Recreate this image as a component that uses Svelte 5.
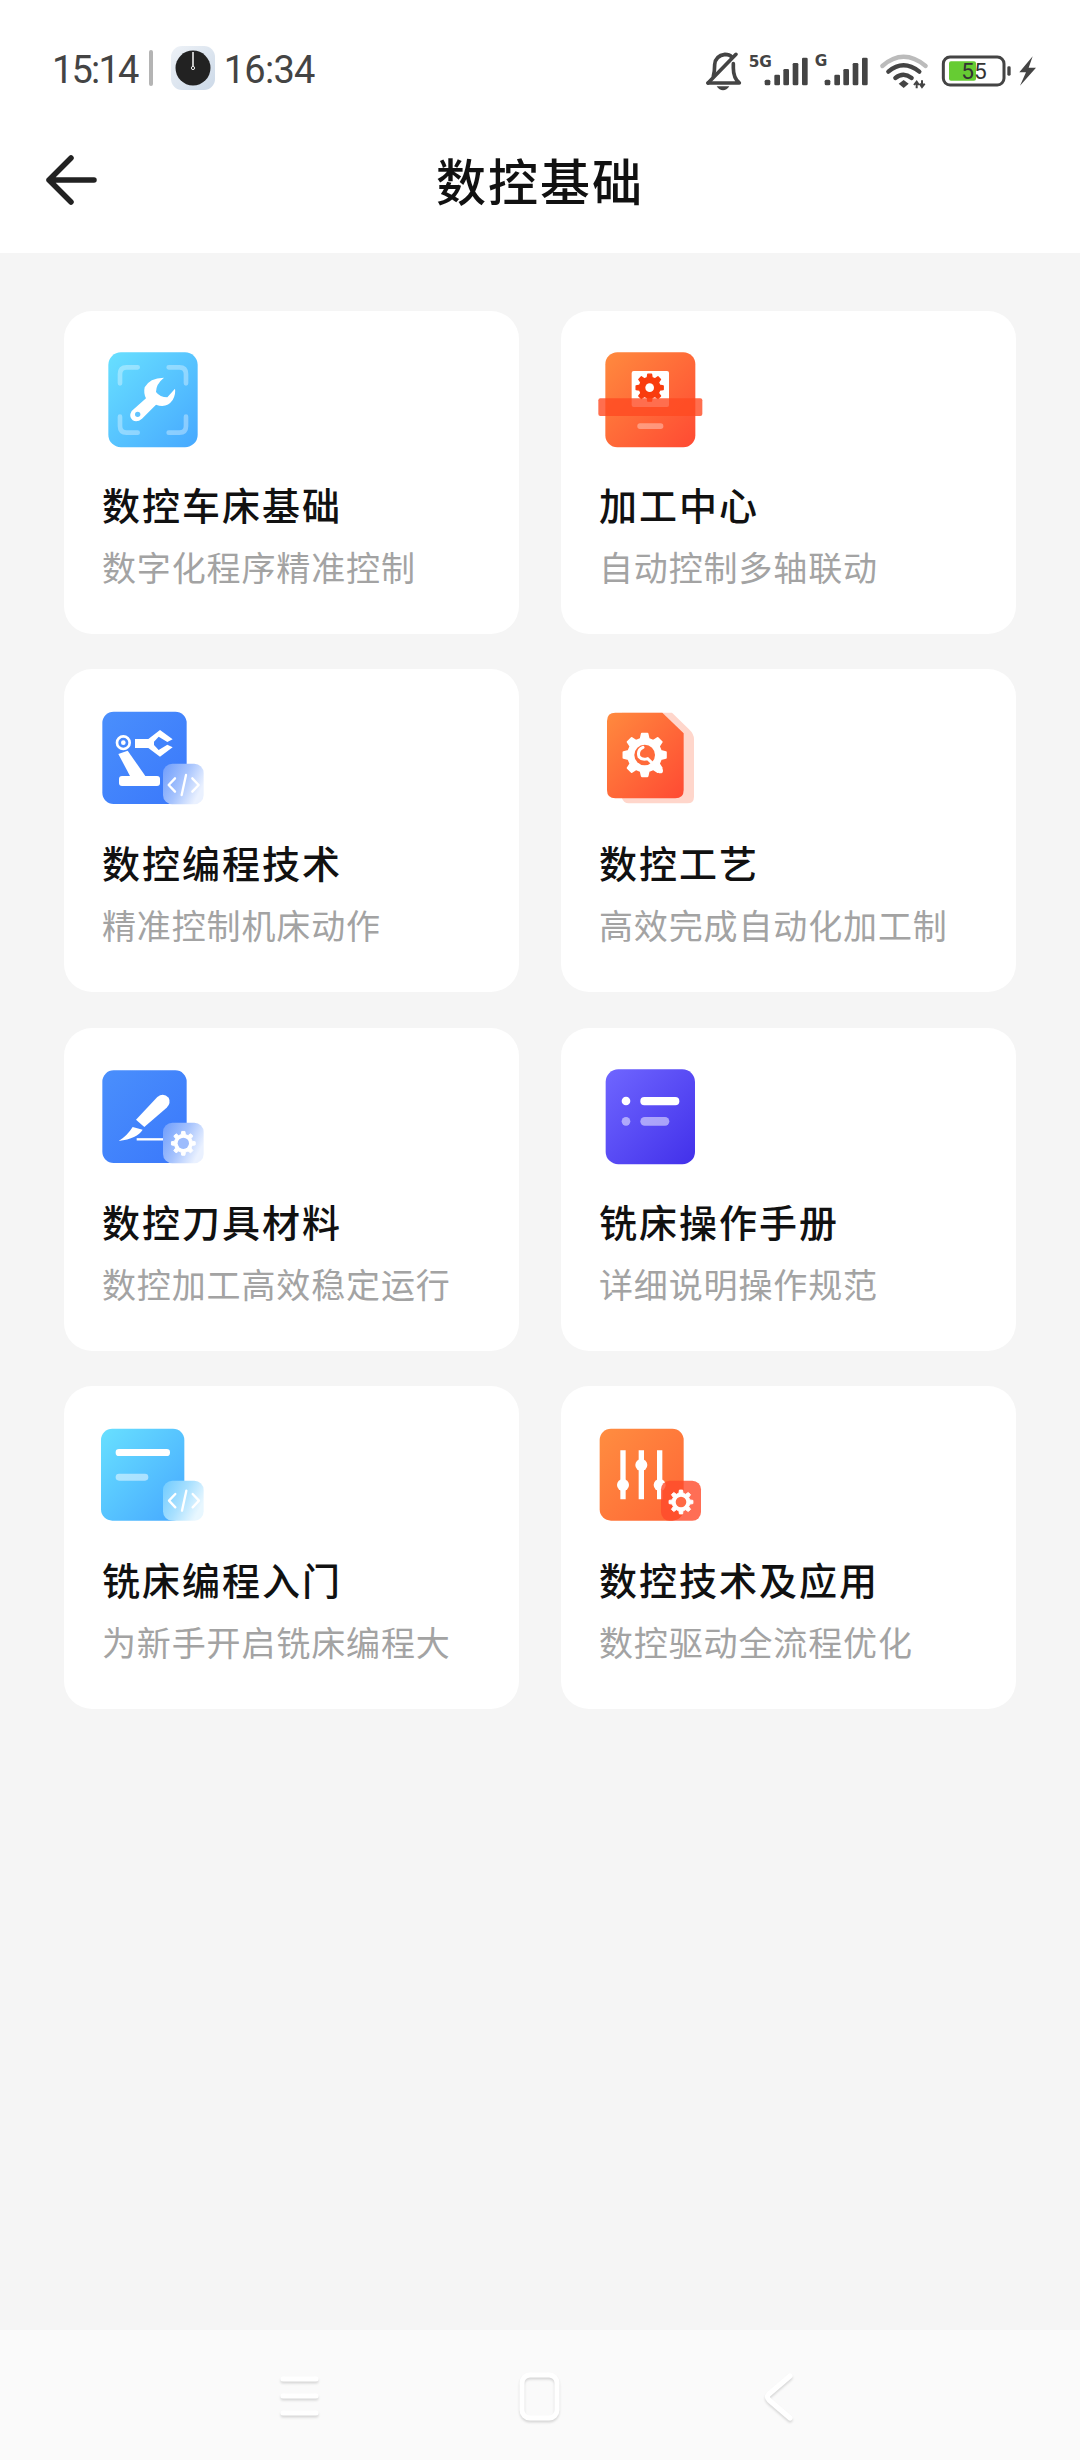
<script lang="ts">
	// gear outline in the icon's own coordinates
	function gear(cx: number, cy: number, r: number, R: number, teeth = 8): string {
		const step = (Math.PI * 2) / teeth;
		let d = '';
		for (let i = 0; i < teeth; i++) {
			const a = i * step - Math.PI / 2;
			const pts = [
				[r, a - step * 0.3],
				[R, a - step * 0.17],
				[R, a + step * 0.17],
				[r, a + step * 0.3]
			];
			for (const [rad, t] of pts) {
				d += (d ? 'L' : 'M') + (cx + rad * Math.cos(t)).toFixed(1) + ' ' + (cy + rad * Math.sin(t)).toFixed(1);
			}
		}
		return d + 'Z';
	}

	const items = [
		{ key: 'wrench', title: '数控车床基础', desc: '数字化程序精准控制' },
		{ key: 'box', title: '加工中心', desc: '自动控制多轴联动' },
		{ key: 'robot', title: '数控编程技术', desc: '精准控制机床动作' },
		{ key: 'file', title: '数控工艺', desc: '高效完成自动化加工制' },
		{ key: 'knife', title: '数控刀具材料', desc: '数控加工高效稳定运行' },
		{ key: 'list', title: '铣床操作手册', desc: '详细说明操作规范' },
		{ key: 'doc', title: '铣床编程入门', desc: '为新手开启铣床编程大' },
		{ key: 'sliders', title: '数控技术及应用', desc: '数控驱动全流程优化' }
	];

	const views: Record<string, string> = {
		wrench: '126 93 360 348',
		box: '116 93 360 348',
		robot: '66 27 360 348',
		file: '26 27 360 348',
		knife: '66 21 360 348',
		list: '26 21 360 348',
		doc: '66 15 360 348',
		sliders: '26 15 360 348'
	};
</script>

{#snippet code()}
	<path d="M285 265L266 285L285 305M318 255L305 315M337 265L356 285L337 305" class="code" />
{/snippet}

<div class="page">
	<header class="head">
		<div class="status">
			<div class="status-left">
				<span class="time first">15:14</span>
				<span class="sep"></span>
				<svg class="clock" width="44" height="44" viewBox="0 0 44 44">
					<rect width="44" height="44" rx="11" fill="url(#clockbg)" />
					<circle cx="22" cy="22" r="17.5" fill="#222" />
					<path d="M22 6V20" stroke="#eee" stroke-width="1.6" />
					<circle cx="22" cy="22" r="1.6" fill="#222" stroke="#eee" stroke-width="1" />
					<defs>
						<linearGradient id="clockbg" x1="0" y1="0" x2="1" y2="1">
							<stop offset="0" stop-color="#eef2f7" />
							<stop offset="1" stop-color="#ccd9e8" />
						</linearGradient>
					</defs>
				</svg>
				<span class="time">16:34</span>
			</div>
			<svg class="sys" width="400" height="70" viewBox="0 0 1200 210">
				<g fill="none" stroke="#444" stroke-width="11" stroke-linecap="round" stroke-linejoin="round">
					<path d="M84 150H178Q160 135 160 105V92M100 130Q104 115 104 95Q106 68 135 64Q148 64 156 72" />
					<path d="M84 150L168 64" />
				</g>
				<path d="M110 160H148Q140 172 129 172Q118 172 110 160Z" fill="#444" />
				<text x="206" y="103" class="net">5G</text>
				<text x="404" y="100" class="net">G</text>
				<g fill="#444">
					<rect x="254" y="140" width="17" height="17" rx="5" />
					<rect x="283" y="125" width="17" height="32" rx="4" />
					<rect x="310" y="108" width="17" height="49" rx="4" />
					<rect x="338" y="90" width="17" height="67" rx="4" />
					<rect x="366" y="74" width="17" height="83" rx="4" />
					<rect x="434" y="140" width="17" height="17" rx="5" />
					<rect x="463" y="125" width="17" height="32" rx="4" />
					<rect x="490" y="108" width="17" height="49" rx="4" />
					<rect x="518" y="90" width="17" height="67" rx="4" />
					<rect x="546" y="74" width="17" height="83" rx="4" />
				</g>
				<g fill="none" stroke-width="13" stroke-linecap="round">
					<path d="M607 99Q670 44 737 99" stroke="#bbb" />
					<path d="M625 116Q670 78 718 116" stroke="#444" />
					<path d="M646 135Q670 116 695 135" stroke="#444" />
				</g>
				<path d="M656 152L671 141L686 152L671 165Z" fill="#444" />
				<path d="M710 148V166M702 156L710 146L717 156M726 142V160M719 152L726 162L734 152" fill="none" stroke="#444" stroke-width="6" />
				<rect x="790" y="72" width="182" height="84" rx="20" fill="none" stroke="#444" stroke-width="9" />
				<rect x="807" y="85" width="81" height="58" rx="6" fill="#66cc33" />
				<text x="882" y="138" class="batt">55</text>
				<rect x="982" y="100" width="10" height="28" rx="4" fill="#444" />
				<path d="M1058 70L1018 118H1038L1020 158L1068 104H1046Z" fill="#444" />
			</svg>
		</div>
		<div class="topbar">
			<svg class="back" width="54" height="50" viewBox="0 0 54 50">
				<path d="M4 25H49M26 3L4 25L26 47" fill="none" stroke="#222" stroke-width="5.5" stroke-linecap="round" stroke-linejoin="round" />
			</svg>
			<h1>数控基础</h1>
		</div>
	</header>

	<main class="grid">
		{#each items as item}
			<article class="card">
				<svg class="icon" width="120" height="116" viewBox={views[item.key]}>
					{#if item.key === 'wrench'}
						<rect x="145" y="127" width="268" height="285" rx="38" fill="url(#sky)" />
						<path d="M180 220V192Q180 172 200 172H233M326 172H358Q378 172 378 192V220M180 320V348Q180 368 200 368H233M326 368H358Q378 368 378 348V320" fill="none" stroke="#fff" stroke-opacity=".35" stroke-width="14" stroke-linecap="round" />
						<path d="M312 203Q268 204 254 232Q250 250 258 265L215 303Q205 320 218 331Q232 338 246 326L288 284Q320 296 338 270Q348 252 345 236L322 262Q300 262 288 246Q288 222 312 203Z" fill="#fff" />
						<circle cx="233" cy="313" r="8" fill="#62c4ff" />
					{:else if item.key === 'box'}
						<rect x="135" y="127" width="270" height="285" rx="36" fill="url(#flame)" />
						<rect x="214" y="183" width="112" height="108" rx="6" fill="#fff" />
						<path d={gear(268, 233, 31, 41)} fill="#f93c0e" stroke="#f93c0e" stroke-width="4" stroke-linejoin="round" />
						<circle cx="268" cy="233" r="13" fill="#fff" />
						<rect x="114" y="265" width="312" height="53" rx="6" fill="#ff4a22" fill-opacity=".8" />
						<rect x="231" y="340" width="78" height="17" rx="8" fill="#fff" fill-opacity=".35" />
					{:else if item.key === 'robot'}
						<rect x="67" y="65" width="253" height="277" rx="34" fill="url(#blue)" />
						<circle cx="130" cy="158" r="19" fill="none" stroke="#fff" stroke-width="8" />
						<circle cx="130" cy="158" r="7" fill="#fff" />
						<path d="M165 147H205L240 120L278 148L262 156L236 140L222 155V165L236 180L262 164L278 172L240 200L205 174H165Z" fill="#fff" />
						<path d="M115 192L143 182L196 258H150Z" fill="#fff" />
						<rect x="117" y="258" width="123" height="30" rx="9" fill="#fff" />
						<rect x="249" y="221" width="122" height="122" rx="28" fill="url(#glass)" />
						{@render code()}
					{:else if item.key === 'file'}
						<path d="M245 68L296 118Q311 132 311 148V320Q311 340 291 340H115Q100 340 95 325V68Z" fill="#ffd6cb" />
						<path d="M75 68H216L280 130V300Q280 325 255 325H75Q50 325 50 300V93Q50 68 75 68Z" fill="url(#flame)" />
						<path d={gear(163, 195, 50, 64)} fill="#fff" stroke="#fff" stroke-width="6" stroke-linejoin="round" />
						<circle cx="163" cy="195" r="31" fill="#ff6a3a" />
						<path d="M158 172Q140 180 146 200Q156 212 172 206L205 238" fill="none" stroke="#fff" stroke-width="9" stroke-linecap="round" />
						<circle cx="210" cy="242" r="8" fill="#fff" />
					{:else if item.key === 'knife'}
						<rect x="67" y="58" width="253" height="278" rx="34" fill="url(#blue)" />
						<path d="M168 206L232 138Q250 124 266 140Q274 156 260 170L193 228Z" fill="#fff" />
						<path d="M158 228L188 236Q172 262 116 270Q142 254 158 228Z" fill="#fff" />
						<path d="M170 265H250" stroke="#fff" stroke-width="7" />
						<rect x="249" y="215" width="122" height="122" rx="28" fill="url(#glass)" />
						<path d={gear(310, 277, 27, 36)} fill="#fff" stroke="#fff" stroke-width="3" stroke-linejoin="round" />
						<circle cx="310" cy="277" r="17" fill="#9dbcfd" />
					{:else if item.key === 'list'}
						<rect x="46" y="55" width="268" height="285" rx="38" fill="url(#violet)" />
						<circle cx="107" cy="150" r="13" fill="#fff" />
						<rect x="150" y="138" width="117" height="25" rx="12" fill="#fff" />
						<circle cx="107" cy="211" r="13" fill="#fff" fill-opacity=".5" />
						<rect x="150" y="198" width="87" height="26" rx="13" fill="#fff" fill-opacity=".5" />
					{:else if item.key === 'doc'}
						<rect x="63" y="53" width="250" height="276" rx="34" fill="url(#sky)" />
						<rect x="107" y="114" width="163" height="21" rx="10" fill="#fff" />
						<rect x="107" y="188" width="98" height="21" rx="10" fill="#fff" fill-opacity=".5" />
						<rect x="249" y="209" width="122" height="120" rx="28" fill="url(#glassCyan)" />
						<g transform="translate(1 -16)">{@render code()}</g>
					{:else}
						<rect x="28" y="53" width="252" height="276" rx="34" fill="url(#amber)" />
						<path d="M98 118V265M153 118V265M208 118V265" stroke="#fff" stroke-width="16" />
						<circle cx="98" cy="222" r="18" fill="#fff" />
						<circle cx="153" cy="162" r="18" fill="#fff" />
						<circle cx="208" cy="222" r="18" fill="#fff" />
						<rect x="212" y="209" width="120" height="120" rx="26" fill="#ff4a2a" fill-opacity=".8" />
						<path d={gear(272, 273, 27, 36)} fill="#fff" stroke="#fff" stroke-width="3" stroke-linejoin="round" />
						<circle cx="272" cy="273" r="16" fill="#ff6a45" />
					{/if}
				</svg>
				<h2>{item.title}</h2>
				<p>{item.desc}</p>
			</article>
		{/each}
	</main>

	<nav class="nav">
		<svg class="nav-icons" width="600" height="130" viewBox="0 0 600 130">
			<g fill="none" stroke="#fff" stroke-width="5" stroke-linecap="round" stroke-linejoin="round">
				<path d="M43 49H76M43 66H76M43 83H76" />
				<rect x="282" y="45" width="35" height="43" rx="8" />
				<path d="M550 46L529 64Q526 67 529 70L550 88" />
			</g>
		</svg>
	</nav>

	<!-- shared gradients for the card icons -->
	<svg class="defs" width="0" height="0">
		<defs>
			<linearGradient id="sky" x1="0" y1="0" x2="1" y2="1">
				<stop offset="0" stop-color="#68e0ff" />
				<stop offset="1" stop-color="#46a8ff" />
			</linearGradient>
			<linearGradient id="flame" x1="0" y1="0" x2="1" y2="1">
				<stop offset="0" stop-color="#ff8a3e" />
				<stop offset="1" stop-color="#ff4a33" />
			</linearGradient>
			<linearGradient id="amber" x1="0" y1="0" x2="1" y2="1">
				<stop offset="0" stop-color="#ff8d40" />
				<stop offset="1" stop-color="#ff6636" />
			</linearGradient>
			<linearGradient id="blue" x1="0" y1="0" x2="1" y2="1">
				<stop offset="0" stop-color="#4a8ffc" />
				<stop offset="1" stop-color="#3a78fb" />
			</linearGradient>
			<linearGradient id="violet" x1="0" y1="0" x2="1" y2="1">
				<stop offset="0" stop-color="#6f66ff" />
				<stop offset="1" stop-color="#4230ea" />
			</linearGradient>
			<linearGradient id="glass" x1="0" y1="0" x2="1" y2=".5">
				<stop offset="0" stop-color="#6d9cfc" />
				<stop offset=".55" stop-color="#a6c3fd" />
				<stop offset="1" stop-color="#eaf1ff" />
			</linearGradient>
			<linearGradient id="glassCyan" x1="0" y1="0" x2="1" y2=".5">
				<stop offset="0" stop-color="#6fcbff" />
				<stop offset=".55" stop-color="#a8e0ff" />
				<stop offset="1" stop-color="#e8f7ff" />
			</linearGradient>
		</defs>
	</svg>
</div>

<style>
	:global(body) {
		margin: 0;
		background: #f5f5f5;
	}

	.page {
		min-height: 2460px;
		display: flex;
		flex-direction: column;
		font-family: 'Noto Sans CJK SC', 'Noto Sans', sans-serif;
		background: #f5f5f5;
	}

	.head {
		background: #fff;
	}

	.status {
		height: 80px;
		padding-top: 28px;
		display: flex;
		align-items: center;
		justify-content: space-between;
	}

	.status-left {
		display: flex;
		align-items: center;
		padding-left: 52px;
	}

	.time {
		font-family: Roboto, sans-serif;
		font-size: 38px;
		font-weight: 400;
		letter-spacing: -0.7px;
		color: #444;
		position: relative;
		top: 2px;
	}

	.time.first {
		letter-spacing: -1.8px;
	}

	.sep {
		width: 4px;
		height: 36px;
		margin: 0 18px 0 11px;
		background: #b4b4b4;
		border-radius: 2px;
	}

	.clock {
		margin-right: 9px;
	}

	.sys {
		display: block;
		flex: none;
	}

	.net {
		font-family: 'DejaVu Sans', sans-serif;
		font-size: 46px;
		font-weight: 700;
		fill: #444;
	}

	.batt {
		font-family: Roboto, sans-serif;
		font-size: 68px;
		text-anchor: middle;
		fill: #333;
	}

	.topbar {
		height: 145px;
		position: relative;
		display: flex;
		align-items: center;
		justify-content: center;
	}

	.back {
		position: absolute;
		left: 45px;
		top: 47px;
	}

	h1 {
		margin: 0;
		font-size: 50px;
		font-weight: 500;
		letter-spacing: 2px;
		color: #111;
		position: relative;
		top: -2px;
	}

	.grid {
		flex: 1;
		display: grid;
		grid-template-columns: 455px 455px;
		grid-auto-rows: 323px;
		align-content: start;
		column-gap: 42px;
		row-gap: 35.3px;
		padding: 58px 64px 0;
	}

	.card {
		background: #fff;
		border-radius: 28px;
		padding: 30px 38px 0;
	}

	.icon {
		display: block;
		overflow: visible;
	}

	h2 {
		margin: 20px 0 0;
		font-size: 38px;
		line-height: 54px;
		font-weight: 500;
		letter-spacing: 2px;
		color: #111;
		white-space: nowrap;
	}

	p {
		margin: 14px 0 0;
		font-size: 34px;
		line-height: 44px;
		letter-spacing: 0.86px;
		color: #a3a3a3;
		white-space: nowrap;
	}

	.code {
		fill: none;
		stroke: #fff;
		stroke-width: 7;
		stroke-linecap: round;
		stroke-linejoin: round;
	}

	.nav {
		height: 130px;
		background: #fafafa;
		display: flex;
		justify-content: center;
	}

	.nav-icons {
		filter: drop-shadow(0 2px 1px rgba(0, 0, 0, 0.14));
	}

	.defs {
		position: absolute;
	}
</style>
